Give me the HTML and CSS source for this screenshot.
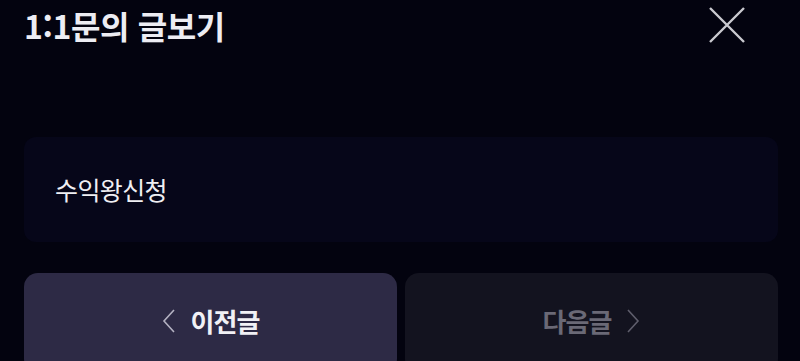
FILE: index.html
```html
<!DOCTYPE html>
<html lang="ko">
<head>
<meta charset="utf-8">
<link rel="stylesheet" href="styles.css">
</head>
<body>
<div class="page">
  <header class="header">
    <h1 class="title">1:1문의 글보기</h1>
    <button class="close" aria-label="닫기">
      <svg width="38" height="38" viewBox="0 0 38 38"><path d="M2 2 L36 36 M36 2 L2 36" stroke="#c9c9cf" stroke-width="2.4" fill="none"/></svg>
    </button>
  </header>
  <section class="content">
    <p class="content-text">수익왕신청</p>
  </section>
  <nav class="nav">
    <button class="nav-btn prev">
      <svg class="chev" width="14" height="24" viewBox="0 0 14 24"><path d="M12 1 L2 12 L12 23" stroke="#b4b2c2" stroke-width="1.6" fill="none"/></svg>
      <span>이전글</span>
    </button>
    <button class="nav-btn next">
      <span>다음글</span>
      <svg class="chev" width="14" height="24" viewBox="0 0 14 24"><path d="M2 1 L12 12 L2 23" stroke="#5f5e6c" stroke-width="1.6" fill="none"/></svg>
    </button>
  </nav>
</div>
</body>
</html>
```
FILE: styles.css
```css
* { box-sizing: border-box; }
html, body {
  margin: 0;
  padding: 0;
  background: #03030f;
  overflow: hidden;
}
body {
  font-family: "Noto Sans CJK KR", "Noto Sans", sans-serif;
  color: #f0f0f5;
}
.page {
  padding: 0 22px 0 24px;
}
.header {
  display: flex;
  justify-content: space-between;
  align-items: flex-start;
  height: 137px;
}
.title {
  margin: 2px 0 0 0;
  font-size: 32px;
  line-height: 46px;
  font-weight: 700;
  letter-spacing: -0.4px;
  color: #ededf3;
}
.close {
  margin: 6px 32px 0 0;
  padding: 0;
  background: none;
  border: 0;
  width: 38px;
  height: 38px;
}
.close svg { display: block; }
.content {
  background: #060619;
  border-radius: 12px;
  height: 105px;
  display: flex;
  align-items: center;
  padding: 0 31px;
  width: 754px;
}
.content-text {
  margin: 0 0 2px 0;
  font-size: 25px;
  letter-spacing: -0.6px;
  color: #efeff3;
}
.nav {
  margin-top: 31px;
  display: flex;
  gap: 8px;
  width: 754px;
}
.nav-btn {
  flex: 1;
  height: 100px;
  border: 0;
  border-radius: 14px;
  display: flex;
  justify-content: center;
  align-items: flex-start;
  padding-top: 29px;
  gap: 15px;
  font-family: inherit;
  font-size: 26px;
  font-weight: 700;
  letter-spacing: -1px;
}
.nav-btn span { line-height: 38px; }
.chev { margin-top: 7px; display: block; }
.prev {
  background: #2d2a45;
  color: #f1f1f5;
}
.next {
  background: #13131f;
  color: #6a6976;
}
```
